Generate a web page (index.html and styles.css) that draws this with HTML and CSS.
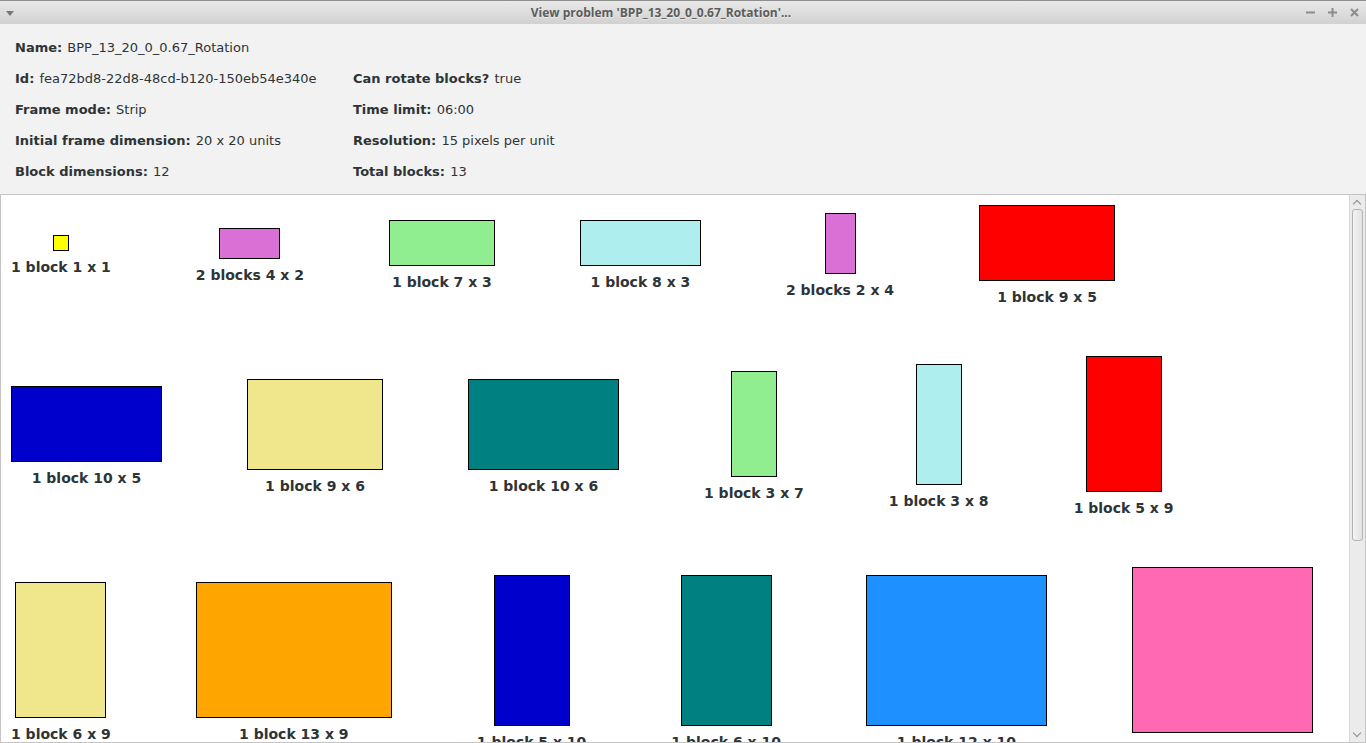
FILE: index.html
```html
<!DOCTYPE html>
<html>
<head>
<meta charset="utf-8">
<link rel="stylesheet" href="styles.css">
</head>
<body>
<div class="window">
  <div class="titlebar">
    <span class="menu-arrow"></span>
    <span class="title">View problem 'BPP_13_20_0_0.67_Rotation'...</span>
    <div class="controls">
      <svg width="9" height="9" viewBox="0 0 9 9"><rect x="0" y="3.5" width="9" height="2" fill="#8c8c8c"/></svg>
      <svg width="9" height="9" viewBox="0 0 9 9"><rect x="0" y="3.5" width="9" height="2" fill="#8c8c8c"/><rect x="3.5" y="0" width="2" height="9" fill="#8c8c8c"/></svg>
      <svg width="9" height="9" viewBox="0 0 9 9"><path d="M1 1 L8 8 M8 1 L1 8" stroke="#8c8c8c" stroke-width="2"/></svg>
    </div>
  </div>
  <div class="info">
    <div class="field"><b>Name:</b> BPP_13_20_0_0.67_Rotation</div>
    <div class="field"></div>
    <div class="field"><b>Id:</b> fea72bd8-22d8-48cd-b120-150eb54e340e</div>
    <div class="field"><b>Can rotate blocks?</b> true</div>
    <div class="field"><b>Frame mode:</b> Strip</div>
    <div class="field"><b>Time limit:</b> 06:00</div>
    <div class="field"><b>Initial frame dimension:</b> 20 x 20 units</div>
    <div class="field"><b>Resolution:</b> 15 pixels per unit</div>
    <div class="field"><b>Block dimensions:</b> 12</div>
    <div class="field"><b>Total blocks:</b> 13</div>
  </div>
  <div class="scrollpane">
    <div class="canvas">
      <div class="row">
        <div class="item"><div class="rect yellow" style="width:16px;height:16px"></div><div class="label">1 block 1 x 1</div></div>
        <div class="item"><div class="rect orchid" style="width:61px;height:31px"></div><div class="label">2 blocks 4 x 2</div></div>
        <div class="item"><div class="rect lightgreen" style="width:106px;height:46px"></div><div class="label">1 block 7 x 3</div></div>
        <div class="item"><div class="rect turquoise" style="width:121px;height:46px"></div><div class="label">1 block 8 x 3</div></div>
        <div class="item"><div class="rect orchid" style="width:31px;height:61px"></div><div class="label">2 blocks 2 x 4</div></div>
        <div class="item"><div class="rect red" style="width:136px;height:76px"></div><div class="label">1 block 9 x 5</div></div>
      </div>
      <div class="row">
        <div class="item"><div class="rect blue" style="width:151px;height:76px"></div><div class="label">1 block 10 x 5</div></div>
        <div class="item"><div class="rect khaki" style="width:136px;height:91px"></div><div class="label">1 block 9 x 6</div></div>
        <div class="item"><div class="rect teal" style="width:151px;height:91px"></div><div class="label">1 block 10 x 6</div></div>
        <div class="item"><div class="rect lightgreen" style="width:46px;height:106px"></div><div class="label">1 block 3 x 7</div></div>
        <div class="item"><div class="rect turquoise" style="width:46px;height:121px"></div><div class="label">1 block 3 x 8</div></div>
        <div class="item"><div class="rect red" style="width:76px;height:136px"></div><div class="label">1 block 5 x 9</div></div>
      </div>
      <div class="row">
        <div class="item"><div class="rect khaki" style="width:91px;height:136px"></div><div class="label">1 block 6 x 9</div></div>
        <div class="item"><div class="rect orange" style="width:196px;height:136px"></div><div class="label">1 block 13 x 9</div></div>
        <div class="item"><div class="rect blue" style="width:76px;height:151px"></div><div class="label">1 block 5 x 10</div></div>
        <div class="item"><div class="rect teal" style="width:91px;height:151px"></div><div class="label">1 block 6 x 10</div></div>
        <div class="item"><div class="rect dodger" style="width:181px;height:151px"></div><div class="label">1 block 12 x 10</div></div>
        <div class="item"><div class="rect pink" style="width:181px;height:166px"></div><div class="label">1 block 12 x 11</div></div>
      </div>
    </div>
    <div class="scrollbar">
      <div class="arrow up"></div>
      <div class="track"><div class="thumb"></div></div>
      <div class="arrow down"></div>
    </div>
  </div>
</div>
</body>
</html>
```
FILE: styles.css
```css
html, body {
  margin: 0;
  padding: 0;
  width: 1366px;
  height: 743px;
  overflow: hidden;
  background: #f2f2f2;
}
.window {
  display: flex;
  flex-direction: column;
  width: 1366px;
  height: 743px;
  font-family: "DejaVu Sans", sans-serif;
  color: #2e3436;
}
.titlebar {
  position: relative;
  height: 23px;
  border-top: 1px solid #8e8e8e;
  background: linear-gradient(#e9e9e9, #d1d1d1);
  display: flex;
  align-items: center;
  justify-content: center;
  padding-right: 44px;
  flex-shrink: 0;
}
.menu-arrow {
  position: absolute;
  left: 6px;
  top: 10px;
  width: 0;
  height: 0;
  border-left: 4px solid transparent;
  border-right: 4px solid transparent;
  border-top: 5px solid #777;
}
.title {
  font-family: "Open Sans", sans-serif;
  font-weight: bold;
  font-size: 12px;
  color: #5c5c5c;
  text-shadow: 0 1px 0 rgba(255,255,255,0.5);
}
.controls {
  position: absolute;
  right: 7px;
  top: 7px;
  display: flex;
  gap: 13px;
}
.controls svg { display: block; }
.info {
  display: grid;
  grid-template-columns: 338px 1fr;
  grid-auto-rows: 31px;
  padding: 8px 15px 7px;
  font-size: 13px;
  line-height: 31px;
  flex-shrink: 0;
}
.field { white-space: nowrap; }
.field b { font-weight: bold; margin-right: 1px; }
.scrollpane {
  flex: 1;
  display: flex;
  background: #fff;
  border: 1px solid #c4c4c4;
  min-height: 0;
}
.canvas {
  flex: 1;
  overflow: hidden;
  padding: 10px 0 0 10px;
  display: flex;
  flex-direction: column;
  gap: 50px;
}
.row {
  display: flex;
  align-items: center;
  gap: 85px;
}
.item {
  display: flex;
  flex-direction: column;
  align-items: center;
  flex-shrink: 0;
}
.rect {
  box-sizing: border-box;
  border: 1px solid #000;
}
.label {
  margin-top: 7px;
  line-height: 18px;
  font-size: 14px;
  font-weight: bold;
  color: #2e3436;
  white-space: nowrap;
}
.yellow { background: #ffff00; }
.orchid { background: #da70d6; }
.lightgreen { background: #90ee90; }
.turquoise { background: #afeeee; }
.red { background: #ff0000; }
.blue { background: #0000cd; }
.khaki { background: #f0e68c; }
.teal { background: #008080; }
.orange { background: #ffa500; }
.dodger { background: #1e90ff; }
.pink { background: #ff69b4; }
.scrollbar {
  width: 15px;
  border-left: 1px solid #d6d6d6;
  background: #ebebeb;
  display: flex;
  flex-direction: column;
  flex-shrink: 0;
}
.arrow {
  height: 14px;
  position: relative;
}
.arrow::before {
  content: "";
  position: absolute;
  left: 4px;
  width: 5px;
  height: 5px;
  border-left: 1px solid #8a8a8a;
  border-top: 1px solid #8a8a8a;
}
.up::before { top: 6px; transform: rotate(45deg); }
.down::before { top: 2px; transform: rotate(225deg); }
.track {
  flex: 1;
  padding: 0 2px;
}
.thumb {
  height: 332px;
  box-sizing: border-box;
  border: 1px solid #b4b4b4;
  border-radius: 3px;
  background: linear-gradient(90deg, #f4f4f4, #e2e2e2);
}
```
